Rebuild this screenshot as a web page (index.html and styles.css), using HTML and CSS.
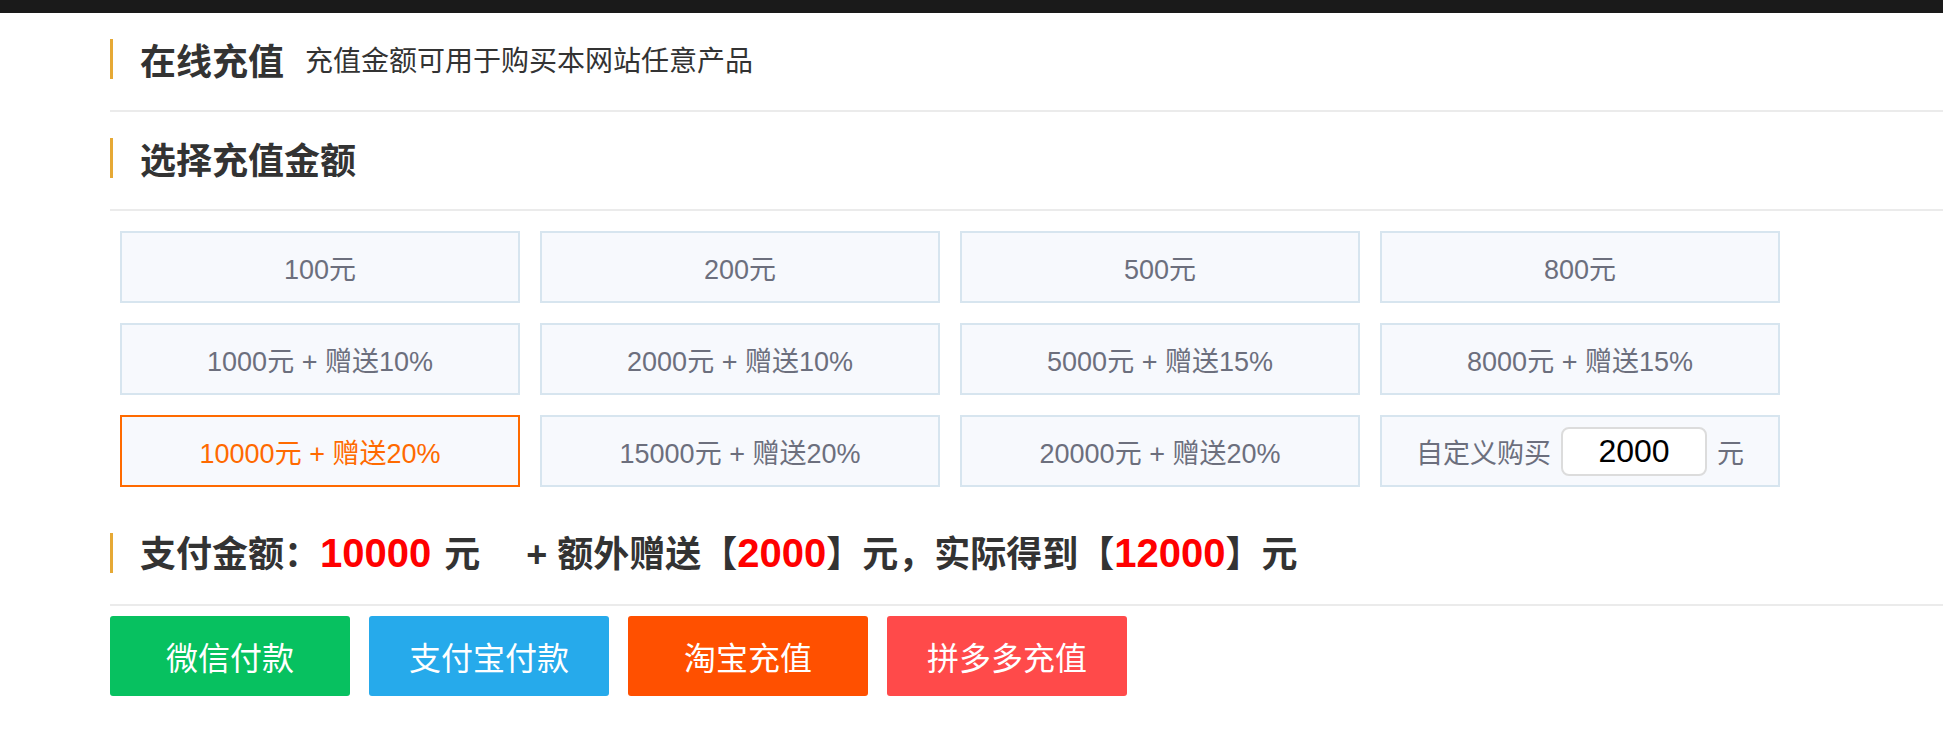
FILE: index.html
```html
<!DOCTYPE html>
<html lang="zh-CN">
<head>
<meta charset="utf-8">
<title>在线充值</title>
<link rel="stylesheet" href="styles.css">
</head>
<body>
<div class="topbar"></div>
<div class="page">
  <div class="sec">
    <div class="sec-title">
      <h1 class="title">在线充值</h1>
      <span class="subtitle">充值金额可用于购买本网站任意产品</span>
    </div>
  </div>
  <div class="sec">
    <div class="sec-title">
      <h2 class="title">选择充值金额</h2>
    </div>
  </div>
  <div class="grid">
    <div class="card">100元</div>
    <div class="card">200元</div>
    <div class="card">500元</div>
    <div class="card">800元</div>
    <div class="card">1000元 + 赠送10%</div>
    <div class="card">2000元 + 赠送10%</div>
    <div class="card">5000元 + 赠送15%</div>
    <div class="card">8000元 + 赠送15%</div>
    <div class="card active">10000元 + 赠送20%</div>
    <div class="card">15000元 + 赠送20%</div>
    <div class="card">20000元 + 赠送20%</div>
    <div class="card custom">
      <span>自定义购买</span>
      <input class="amount" type="text" value="2000">
      <span>元</span>
    </div>
  </div>
  <div class="sec">
    <div class="sec-title pay">
      支付金额：<span class="red">10000</span><span class="unit">元</span>&nbsp;&nbsp;&nbsp;&nbsp;+ 额外赠送【<span class="red">2000</span>】元，实际得到【<span class="red">12000</span>】元
    </div>
  </div>
  <div class="buttons">
    <button class="btn wx">微信付款</button>
    <button class="btn ali">支付宝付款</button>
    <button class="btn tb">淘宝充值</button>
    <button class="btn pdd">拼多多充值</button>
  </div>
</div>
</body>
</html>
```

FILE: styles.css
```css
* { box-sizing: border-box; }
html, body {
  margin: 0;
  padding: 0;
  background: #fff;
  font-family: "Noto Sans CJK SC", "Noto Sans", sans-serif;
  color: #333;
}
.topbar {
  height: 13px;
  background: #1a1a1a;
}
.page {
  padding-left: 110px;
}
.sec {
  padding: 26px 0 31px;
  border-bottom: 2px solid #ebebeb;
}
.sec-title {
  display: flex;
  align-items: center;
  height: 40px;
  border-left: 3px solid #e6a935;
  padding-left: 27px;
  white-space: nowrap;
}
.title {
  margin: 0;
  font-size: 36px;
  font-weight: 700;
  line-height: 40px;
  color: #333;
}
.subtitle {
  margin-left: 21px;
  font-size: 28px;
  line-height: 40px;
  color: #333;
}
.pay {
  display: block;
  font-family: "Liberation Sans", "Noto Sans CJK SC", sans-serif;
  font-size: 36px;
  font-weight: 700;
  line-height: 40px;
  color: #333;
}
.red {
  color: #ff0000;
  font-size: 40px;
}
.unit {
  margin-left: 13px;
  margin-right: 6px;
}
.grid {
  display: grid;
  grid-template-columns: repeat(4, 400px);
  grid-auto-rows: 72px;
  gap: 20px;
  padding: 20px 0 20px 10px;
}
.card {
  display: flex;
  align-items: center;
  justify-content: center;
  border: 2px solid #d7e5ef;
  background: #f7f9fd;
  font-family: "Liberation Sans", "Noto Sans CJK SC", sans-serif;
  font-size: 27px;
  color: #6c6f7d;
  white-space: nowrap;
}
.card.active {
  border-color: #ff6a00;
  color: #ff6a00;
}
.amount {
  width: 146px;
  height: 49px;
  margin: 0 10px;
  border: 2px solid #dcdcdc;
  border-radius: 8px;
  background: #fff;
  font-family: "Liberation Sans", "Noto Sans CJK SC", sans-serif;
  font-size: 32px;
  color: #000;
  text-align: center;
  padding: 0;
}
.buttons {
  display: flex;
  gap: 19px;
  padding-top: 10px;
}
.btn {
  width: 240px;
  height: 80px;
  border: 0;
  border-radius: 3px;
  color: #fff;
  font-family: "Noto Sans CJK SC", "Noto Sans", sans-serif;
  font-size: 32px;
  padding: 0;
}
.wx { background: #07c160; }
.ali { background: #26aaeb; }
.tb { background: #ff5000; }
.pdd { background: #ff4a4a; }
```
